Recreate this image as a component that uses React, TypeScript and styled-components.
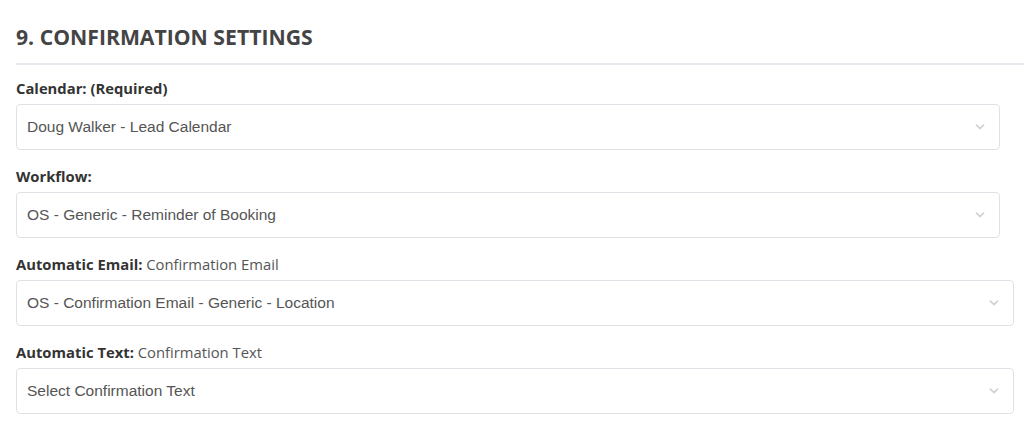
import React from "react";
import styled, { createGlobalStyle } from "styled-components";

const GlobalStyle = createGlobalStyle`
  html, body {
    margin: 0;
    padding: 0;
    background: #ffffff;
  }
  body {
    font-family: "Open Sans", "Liberation Sans", Arial, sans-serif;
  }
`;

const Section = styled.section`
  padding: 24px 0 0 16px;
  display: flex;
  flex-direction: column;
`;

const Heading = styled.h2`
  margin: 0;
  font-family: "Open Sans", sans-serif;
  font-size: 21.2px;
  line-height: 26px;
  font-weight: 700;
  color: #444444;
  padding-bottom: 13px;
  border-bottom: 2px solid #e6e9ed;
`;

const Fields = styled.div`
  display: flex;
  flex-direction: column;
  padding-top: 13px;
`;

const Field = styled.div`
  display: flex;
  flex-direction: column;
  & + & {
    margin-top: 16px;
  }
`;

const Label = styled.label`
  font-family: "Open Sans", sans-serif;
  font-size: 14.8px;
  line-height: 20px;
  color: #333333;
  margin-bottom: 6px;
  font-weight: 400;
`;

const Strong = styled.strong`
  font-weight: 700;
`;

const Note = styled.span`
  color: #555555;
  font-weight: 400;
`;

const SelectBox = styled.div<{ $wide?: boolean }>`
  box-sizing: border-box;
  height: 46px;
  margin-right: ${(p) => (p.$wide ? "10px" : "24px")};
  border: 1px solid #dfe3e8;
  border-radius: 4px;
  background: #ffffff;
  display: flex;
  align-items: center;
  justify-content: space-between;
  padding: 0 14px 0 10px;
  font-family: "Liberation Sans", Arial, sans-serif;
  font-size: 15.5px;
  color: #555555;
`;

const Chevron = () => (
  <svg width="10" height="6" viewBox="0 0 10 6" aria-hidden="true">
    <polyline
      points="1.5,1.2 5,4.6 8.5,1.2"
      fill="none"
      stroke="#d2d2d2"
      strokeWidth="1.7"
      strokeLinecap="round"
      strokeLinejoin="round"
    />
  </svg>
);

type FieldDef = {
  label: string;
  note?: string;
  value: string;
  wide?: boolean;
};

const fields: FieldDef[] = [
  { label: "Calendar: (Required)", value: "Doug Walker - Lead Calendar" },
  { label: "Workflow:", value: "OS - Generic - Reminder of Booking" },
  {
    label: "Automatic Email:",
    note: "Confirmation Email",
    value: "OS - Confirmation Email - Generic - Location",
    wide: true,
  },
  {
    label: "Automatic Text:",
    note: "Confirmation Text",
    value: "Select Confirmation Text",
    wide: true,
  },
];

export default function App() {
  return (
    <>
      <GlobalStyle />
      <Section>
        <Heading>9. CONFIRMATION SETTINGS</Heading>
        <Fields>
          {fields.map((f) => (
            <Field key={f.label}>
              <Label>
                <Strong>{f.label}</Strong>
                {f.note ? <Note> {f.note}</Note> : null}
              </Label>
              <SelectBox $wide={f.wide}>
                <span>{f.value}</span>
                <Chevron />
              </SelectBox>
            </Field>
          ))}
        </Fields>
      </Section>
    </>
  );
}
